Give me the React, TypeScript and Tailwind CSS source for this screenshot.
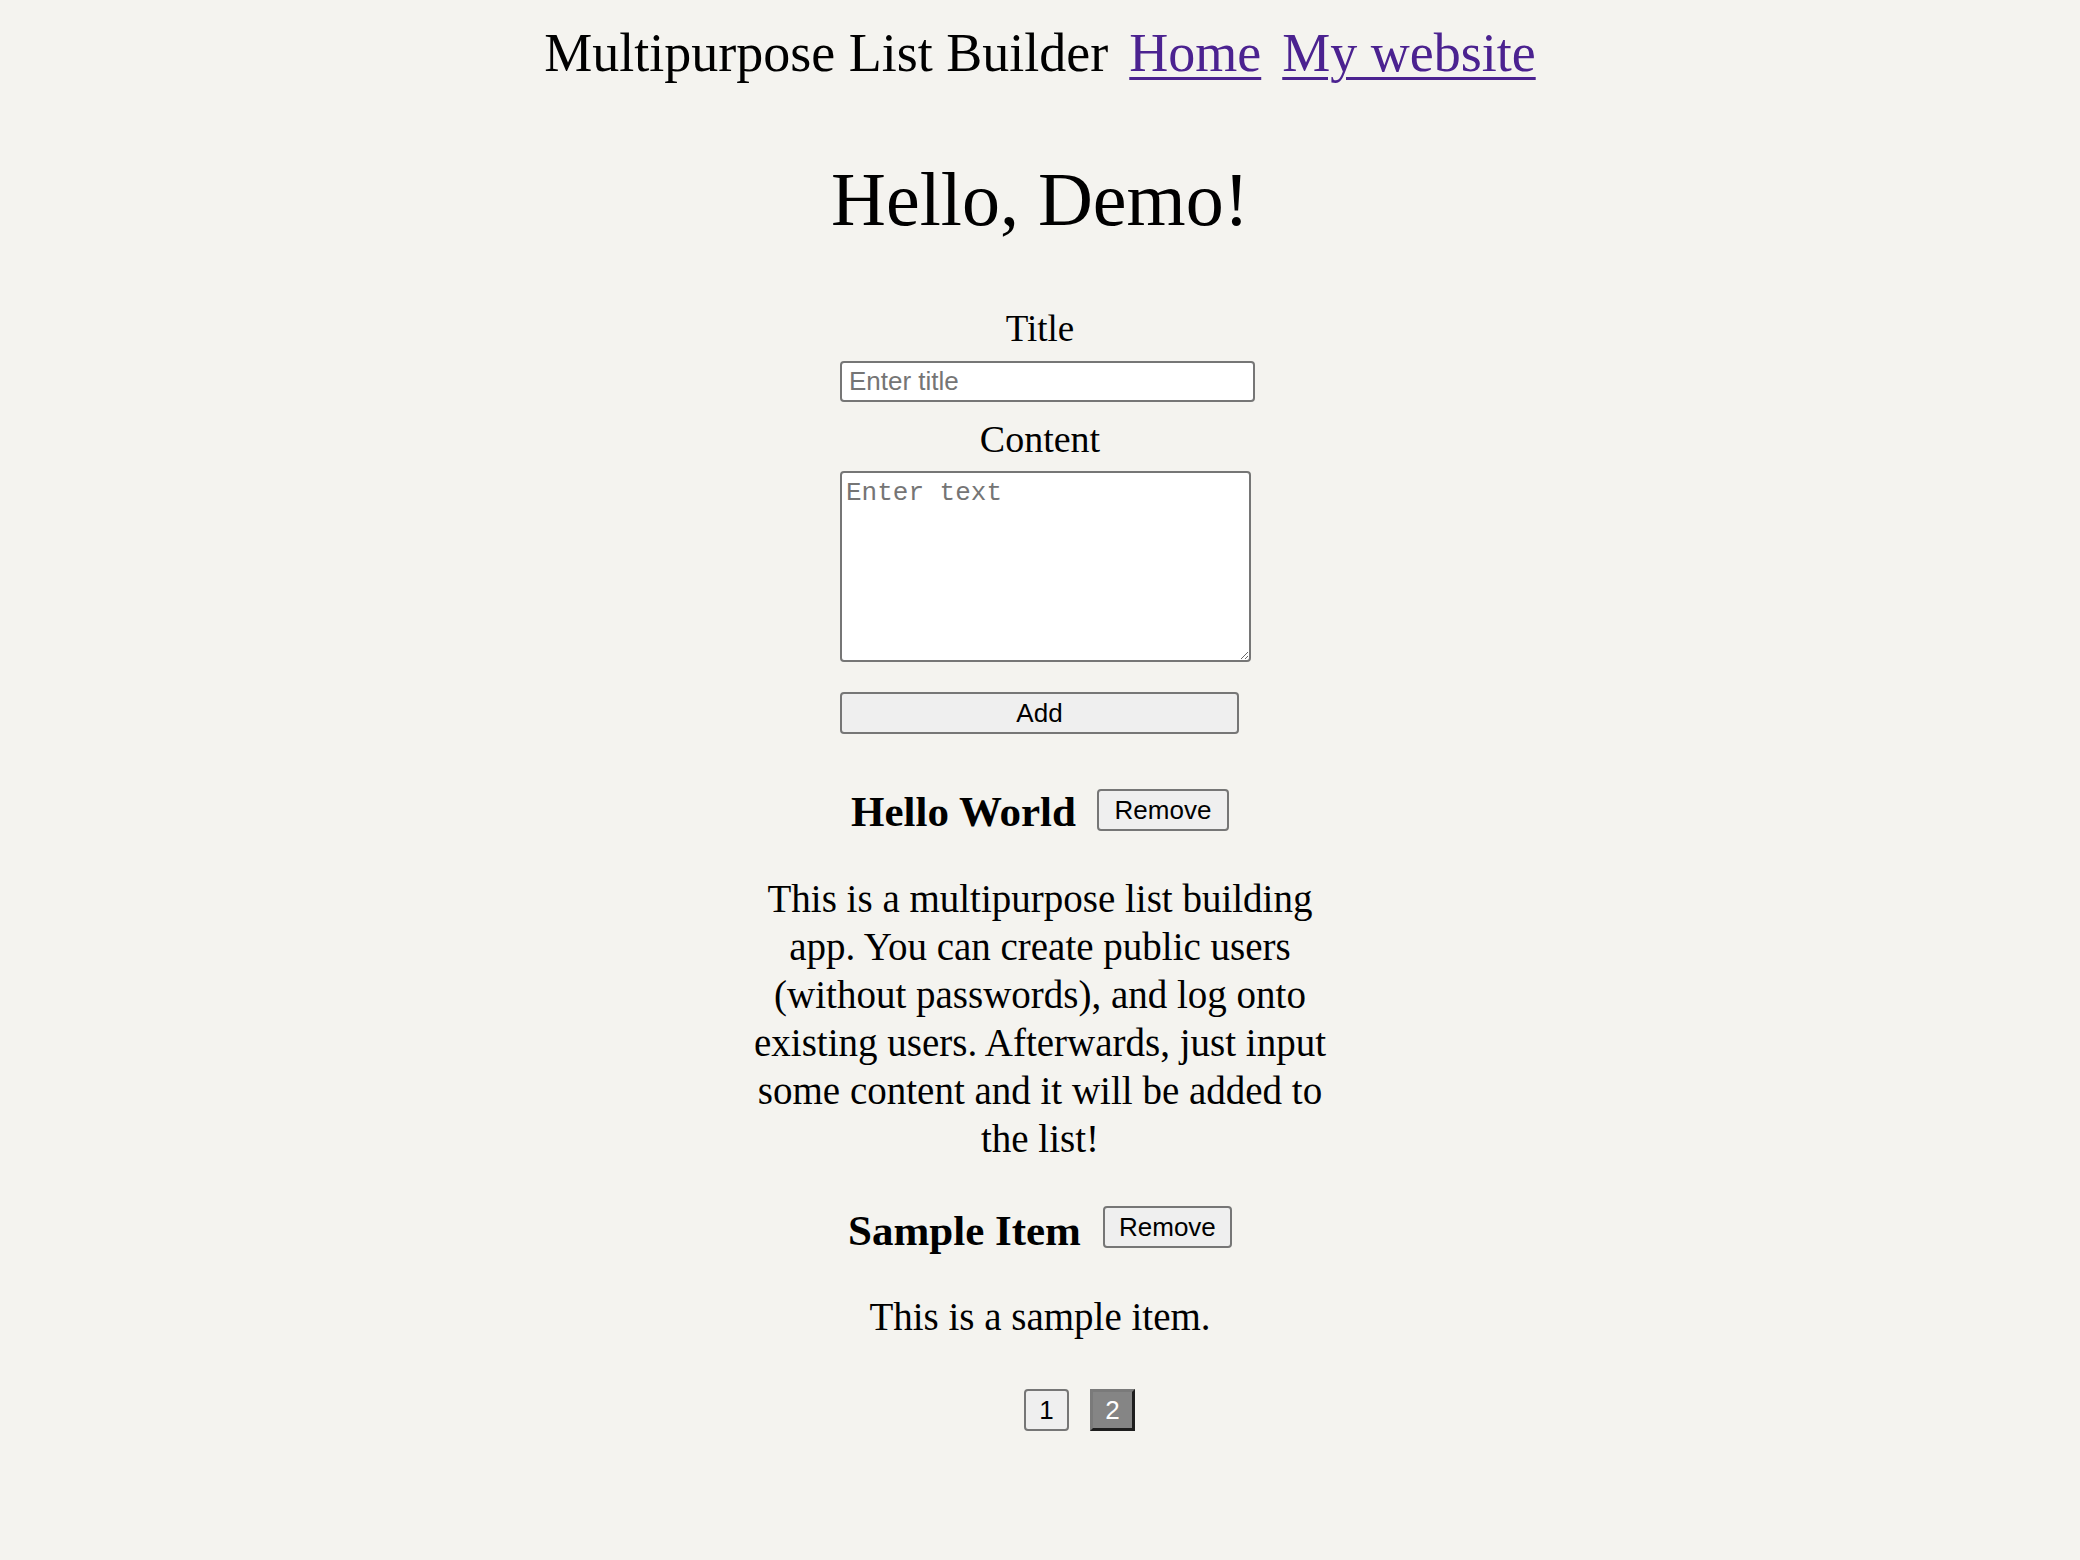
import React from "react";

const serif = { fontFamily: '"Liberation Serif", "Times New Roman", serif' };

export default function App() {
  return (
    <div className="min-h-[1560px] w-full bg-[#f4f3ef] text-black" style={serif}>
      <div className="flex flex-col items-center">
        {/* header */}
        <div className="pt-[22px] flex items-center gap-[21px] text-[54px] leading-[63px]">
          <span>Multipurpose List Builder</span>
          <a href="#" className="text-[#4b2290] underline decoration-[3px] underline-offset-[6px]">Home</a>
          <a href="#" className="text-[#4b2290] underline decoration-[3px] underline-offset-[6px]">My website</a>
        </div>

        <h1 className="mt-[70px] text-[76px] leading-[88px] font-normal">Hello, Demo!</h1>

        {/* form */}
        <div className="w-[400px] flex flex-col items-start">
          <label className="mt-[64px] w-full text-center text-[37px] leading-[44px]">Title</label>
          <input
            type="text"
            placeholder="Enter title"
            className="mt-[10px] w-[415px] h-[41px] bg-white border-2 border-[#767676] rounded-[4px] px-[7px] text-[26px] placeholder:text-[#757575] outline-none"
            style={{ fontFamily: '"Liberation Sans", Arial, sans-serif' }}
          />
          <label className="mt-[15px] w-full text-center text-[38px] leading-[44px]">Content</label>
          <textarea
            placeholder="Enter text"
            className="mt-[10px] w-[411px] h-[191px] bg-white border-2 border-[#767676] rounded-[4px] px-[4px] py-[5px] text-[26px] leading-[30px] placeholder:text-[#757575] outline-none resize-y"
            style={{ fontFamily: '"Liberation Mono", "Courier New", monospace' }}
          />
          <button
            className="mt-[30px] w-[399px] h-[42px] bg-[#efefef] border-2 border-[#767676] rounded-[4px] text-[26px] leading-none text-black"
            style={{ fontFamily: '"Liberation Sans", Arial, sans-serif' }}
          >
            Add
          </button>
        </div>

        {/* item 1 */}
        <div className="mt-[51px] h-[50px] flex items-center gap-[21px]">
          <h2 className="text-[43px] leading-[50px] font-bold pt-[4px]">Hello World</h2>
          <button
            className="w-[132px] h-[42px] bg-[#efefef] border-2 border-[#767676] rounded-[4px] text-[26px] leading-none"
            style={{ fontFamily: '"Liberation Sans", Arial, sans-serif' }}
          >
            Remove
          </button>
        </div>
        <p className="mt-[40px] text-center text-[39px] leading-[48px]">
          This is a multipurpose list building
          <br />
          app. You can create public users
          <br />
          (without passwords), and log onto
          <br />
          existing users. Afterwards, just input
          <br />
          some content and it will be added to
          <br />
          the list!
        </p>

        {/* item 2 */}
        <div className="mt-[42px] h-[50px] flex items-center gap-[22px]">
          <h2 className="text-[43px] leading-[50px] font-bold pt-[2px]">Sample Item</h2>
          <button
            className="w-[129px] h-[42px] bg-[#efefef] border-2 border-[#767676] rounded-[4px] text-[26px] leading-none -mt-[6px]"
            style={{ fontFamily: '"Liberation Sans", Arial, sans-serif' }}
          >
            Remove
          </button>
        </div>
        <p className="mt-[38px] text-center text-[39px] leading-[48px]">This is a sample item.</p>

        {/* pagination */}
        <div
          className="mt-[48px] pl-[79px] flex items-center gap-[21px]"
          style={{ fontFamily: '"Liberation Sans", Arial, sans-serif' }}
        >
          <button className="w-[45px] h-[42px] bg-[#efefef] border-2 border-[#767676] rounded-[4px] text-[26px] leading-none">
            1
          </button>
          <button className="w-[45px] h-[42px] bg-[#858585] border-[3px] border-t-[#7a7a7a] border-l-[#7a7a7a] border-r-[#1e1e1e] border-b-[#1e1e1e] text-white text-[26px] leading-none">
            2
          </button>
        </div>
      </div>
    </div>
  );
}
